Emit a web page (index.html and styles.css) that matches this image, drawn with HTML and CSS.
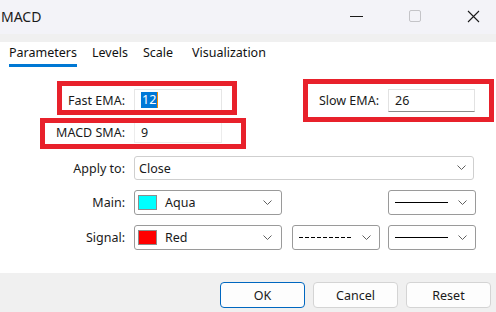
FILE: index.html
```html
<!DOCTYPE html>
<html>
<head>
<meta charset="utf-8">
<link rel="stylesheet" href="styles.css">
</head>
<body>
<div class="window">
  <div class="titlebar">
    <div class="title">MACD</div>
    <div class="controls">
      <span class="ctl ctl-min"></span>
      <span class="ctl ctl-max"></span>
      <svg class="ctl ctl-close" width="13" height="13" viewBox="0 0 13 13"><path d="M1 1 L12 12 M12 1 L1 12" stroke="#1a1a1a" stroke-width="1.1" fill="none"/></svg>
    </div>
  </div>
  <div class="strip"></div>
  <div class="content">
    <div class="tabs">
      <span class="tab active">Parameters</span>
      <span class="tab">Levels</span>
      <span class="tab">Scale</span>
      <span class="tab tab-vis">Visualization</span>
    </div>
    <div class="form">
      <div class="row r1">
        <span class="lbl">Fast EMA:</span>
        <div class="input focused"><span class="selected">12</span><span class="caret"></span></div>
        <span class="lbl">Slow EMA:</span>
        <div class="input slow">26</div>
      </div>
      <div class="row r2">
        <span class="lbl">MACD SMA:</span>
        <div class="input faint">9</div>
      </div>
      <div class="row r3">
        <span class="lbl">Apply to:</span>
        <div class="select light wide"><span class="stext">Close</span>
          <svg class="chev" width="9" height="5" viewBox="0 0 9 5"><path d="M0.5 0.5 L4.5 4.5 L8.5 0.5" stroke="#606060" stroke-width="1" fill="none"/></svg></div>
      </div>
      <div class="row r4">
        <span class="lbl">Main:</span>
        <div class="select color"><span class="swatch aqua"></span><span class="stext">Aqua</span>
          <svg class="chev" width="9" height="5" viewBox="0 0 9 5"><path d="M0.5 0.5 L4.5 4.5 L8.5 0.5" stroke="#606060" stroke-width="1" fill="none"/></svg></div>
        <span></span>
        <div class="select line"><span class="solid"></span>
          <svg class="chev" width="9" height="5" viewBox="0 0 9 5"><path d="M0.5 0.5 L4.5 4.5 L8.5 0.5" stroke="#606060" stroke-width="1" fill="none"/></svg></div>
      </div>
      <div class="row r5">
        <span class="lbl">Signal:</span>
        <div class="select color"><span class="swatch red"></span><span class="stext">Red</span>
          <svg class="chev" width="9" height="5" viewBox="0 0 9 5"><path d="M0.5 0.5 L4.5 4.5 L8.5 0.5" stroke="#606060" stroke-width="1" fill="none"/></svg></div>
        <div class="select line"><span class="dashed"></span>
          <svg class="chev" width="9" height="5" viewBox="0 0 9 5"><path d="M0.5 0.5 L4.5 4.5 L8.5 0.5" stroke="#606060" stroke-width="1" fill="none"/></svg></div>
        <div class="select line"><span class="solid"></span>
          <svg class="chev" width="9" height="5" viewBox="0 0 9 5"><path d="M0.5 0.5 L4.5 4.5 L8.5 0.5" stroke="#606060" stroke-width="1" fill="none"/></svg></div>
      </div>
    </div>
  </div>
  <div class="footer">
    <button class="btn primary">OK</button>
    <button class="btn">Cancel</button>
    <button class="btn">Reset</button>
  </div>
  <div class="mark mark-fast"></div>
  <div class="mark mark-macd"></div>
  <div class="mark mark-slow"></div>
</div>
</body>
</html>
```

FILE: styles.css
```css
* { box-sizing: border-box; }
html, body { margin: 0; padding: 0; }
body {
  width: 496px;
  height: 312px;
  overflow: hidden;
  font-family: "Noto Sans", "Open Sans", sans-serif;
  color: #1a1a1a;
  background: #ffffff;
}
.window {
  position: relative;
  width: 496px;
  height: 312px;
  display: flex;
  flex-direction: column;
}
.titlebar {
  height: 34px;
  background: #f3f3f8;
  display: flex;
  align-items: center;
  justify-content: space-between;
}
.title {
  font-size: 14px;
  padding-left: 1px;
  padding-bottom: 2px;
  color: #1a1a1a;
}
.controls {
  display: flex;
  align-items: center;
  gap: 46px;
  padding-right: 16px;
  padding-bottom: 2px;
}
.ctl { display: block; width: 13px; height: 13px; }
.ctl-min { position: relative; }
.ctl-min::after {
  content: "";
  position: absolute;
  left: 0; right: 0; top: 6px;
  height: 1px;
  background: #1a1a1a;
}
.ctl-max {
  width: 12px; height: 12px;
  border: 1px solid #c4c4c8;
  border-radius: 2px;
}
.strip { height: 8px; background: #f0f0f0; }
.content {
  height: 231px;
  background: #ffffff;
}
.tabs {
  display: flex;
  gap: 15px;
  padding: 2px 0 0 9px;
  font-size: 12.5px;
}
.tab {
  display: inline-block;
  line-height: 18px;
  padding-bottom: 2px;
  border-bottom: 3px solid transparent;
  color: #111;
}
.tab.active { border-bottom-color: #0078d4; }
.tab-vis { margin-left: 4px; }
.form {
  display: flex;
  flex-direction: column;
  font-size: 12.5px;
}
.row {
  display: grid;
  grid-template-columns: 126px 150px 88px 87px;
  column-gap: 8px;
  align-items: center;
}
.r1 { height: 23px; margin-top: 22px; }
.r2 { height: 21px; margin-top: 10px; }
.r3 { height: 24px; margin-top: 13px; }
.r4 { height: 25px; margin-top: 10px; }
.r5 { height: 25px; margin-top: 10px; }
.lbl {
  text-align: right;
  padding-right: 1px;
  white-space: nowrap;
  color: #1a1a1a;
}
.input {
  width: 88px;
  height: 100%;
  background: #fff;
  display: flex;
  align-items: center;
  padding-left: 6px;
  border: 1px solid #e6e6e6;
}
.input.focused {
  border-bottom: 2px solid #2a5ea8;
}
.input.slow {
  width: 87px;
  border-color: #e2e2e2;
  border-bottom-color: #8c8c8c;
}
.input.faint { border-color: #ececec; }
.selected {
  background: #0078d7;
  color: #fff;
  line-height: 16px;
  padding: 0 1px;
}
.caret {
  display: inline-block;
  width: 1px;
  height: 16px;
  background: #f28a00;
}
.select {
  height: 100%;
  border: 1px solid #9a9a9a;
  border-radius: 3px;
  background: #fff;
  display: flex;
  align-items: center;
  position: relative;
}
.select.light { border-color: #cfcfcf; }
.select.wide { grid-column: 2 / 5; width: 340px; padding-left: 4px; }
.select.color { width: 148px; padding-left: 3px; }
.select.line { width: 88px; padding-left: 6px; }
.select .chev { position: absolute; right: 8px; top: 50%; margin-top: -3px; }
.select.wide .chev { right: 7px; }
.select.color .chev { right: 9px; }
.swatch {
  width: 19px;
  height: 15px;
  border: 1px solid #8c8c8c;
  margin-right: 8px;
}
.swatch.aqua { background: #00ffff; }
.swatch.red { background: #ff0000; }
.solid {
  width: 53px;
  height: 1.5px;
  background: #000;
}
.dashed {
  width: 52px;
  height: 1px;
  background: repeating-linear-gradient(to right, #000 0 4px, transparent 4px 6px);
}
.footer {
  height: 39px;
  background: #f0f0f0;
  display: flex;
  justify-content: flex-end;
  align-items: flex-start;
  gap: 8px;
  padding: 9px 5px 0 0;
}
.btn {
  width: 85px;
  height: 26px;
  font-family: "Noto Sans", "Open Sans", sans-serif;
  font-size: 12.5px;
  color: #1a1a1a;
  background: #fdfdfd;
  border: 1px solid #d4d4d4;
  border-radius: 4px;
  padding: 0;
}
.btn.primary { border-color: #0067c0; }
.mark {
  position: absolute;
  border: 5px solid #e8212b;
}
.mark-fast { left: 57px; top: 81px; width: 180px; height: 34px; }
.mark-macd { left: 40px; top: 118px; width: 206px; height: 31px; }
.mark-slow { left: 303px; top: 79px; width: 191px; height: 43px; }
```
